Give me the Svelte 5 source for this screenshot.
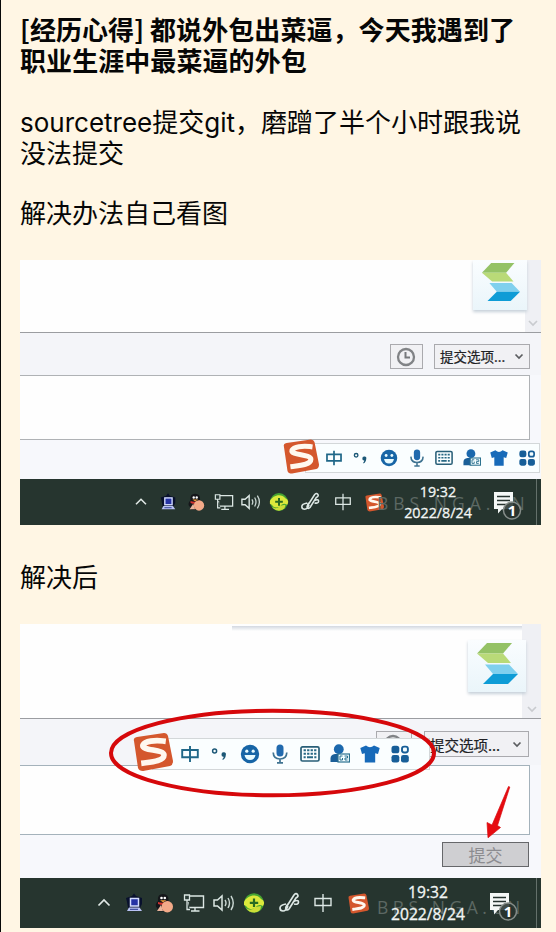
<script>
  const imeIcons = ['zhong', 'punct', 'smile', 'mic', 'keyboard', 'person', 'shirt', 'grid'];
  const trayIcons = ['up', 'pc', 'qq', 'monitor', 'speaker', 'shield', 'pen', 'lang', 'sogou'];
  const trayBefore = [27.6, 27.6, 27.6, 27.6, 27.6, 27.6, 35, 30, 33];
  const trayAfter = [30, 30, 30, 30, 30, 30, 40, 28, 42];
</script>

{#snippet sogou()}
  <svg viewBox="0 0 40 38" class="fill">
    <path d="M1 8Q0 5 4 4L31 0Q34 0 35 3L40 28Q40 32 37 33L10 38Q6 38 5 35Z" fill="#d4572d" />
    <path d="M30 8C22 7 12 8 10 12C8 18 31 16 31 22C31 28 19 29 11 30" fill="none" stroke="#fff8ef" stroke-width="5.6" stroke-linecap="square" stroke-linejoin="round" />
  </svg>
{/snippet}

{#snippet imeIcon(name)}
  <svg viewBox="0 0 20 20" class="ime-icon">
    {#if name === 'zhong'}
      <path d="M2.2 6H17.8V13.2H2.2ZM10 2V18" fill="none" stroke="#1f6788" stroke-width="1.9" />
    {:else if name === 'punct'}
      <circle cx="4.6" cy="7" r="2" fill="none" stroke="#1c5877" stroke-width="1.5" />
      <path d="M11.500 10.500a2.200 2.200 0 1 1 4.300.6c0 2.100-1.100 4-2.900 4.900l-.6-.9c1-.8 1.300-1.500 1.300-2.400a2 2 0 0 1-2.100-2.200Z" fill="#1c5877" />
    {:else if name === 'smile'}
      <circle cx="10" cy="10" r="9.200" fill="#1765a6" />
      <circle cx="6.800" cy="7.200" r="1.600" fill="#e8fbff" /><circle cx="13.200" cy="7.200" r="1.600" fill="#e8fbff" />
      <path d="M4.500 11H15.500Q14.600 16 10 16T4.500 11Z" fill="#e8fbff" />
    {:else if name === 'mic'}
      <rect x="6.500" y=".5" width="7" height="12" rx="3.500" fill="#216aae" />
      <path d="M3.200 8.500Q3.500 15 10 15T16.800 8.500M10 14.500V18.500M7 18.800H13" fill="none" stroke="#3f7391" stroke-width="1.700" />
    {:else if name === 'keyboard'}
      <rect x="1" y="2.800" width="18" height="14.200" rx="1.500" fill="none" stroke="#285f78" stroke-width="1.700" />
      <path d="M3.600 6.300H16.400M3.600 9.700H16.400" stroke="#286985" stroke-width="1.900" stroke-dasharray="2.300 1.200" />
      <path d="M3.600 13.200H5.700M7 13.200H13M14.300 13.200H16.400" stroke="#286985" stroke-width="1.900" />
    {:else if name === 'person'}
      <circle cx="8.800" cy="5.200" r="4.900" fill="#1b68ad" />
      <path d="M.5 18V14.500Q.5 10.500 5 10H10V18Z" fill="#1b5f98" />
      <rect x="8" y="10" width="11.500" height="8" fill="#f3fdff" stroke="#2b718f" stroke-width="1.200" />
      <path d="M12.500 12H10V16H12.500V14M14.500 12H17.500V14H15V16H17.500" fill="none" stroke="#2b718f" />
    {:else if name === 'shirt'}
      <path d="M6 1.500L.3 4L2 10L4.800 9.300V18.500H15.200V9.300L18 10L19.700 4L14 1.500Q10 5 6 1.500Z" fill="#176ab9" />
    {:else}
      <g fill="#175e98">
        <rect x="1.500" y="1.800" width="7.800" height="7.500" rx="2.600" />
        <rect x="1.500" y="11" width="7.800" height="7.500" rx="2.300" />
        <rect x="11" y="11" width="7.800" height="7.500" rx="2.300" />
      </g>
      <rect x="12" y="2.600" width="5.900" height="5.900" rx="2.200" fill="#f3fdff" stroke="#175e98" stroke-width="1.900" />
    {/if}
  </svg>
{/snippet}

{#snippet trayIcon(name)}
  {#if name === 'sogou'}
    <div class="tray-sogou">{@render sogou()}</div>
  {:else}
    <svg viewBox="0 0 22 22" class="tray-icon">
      {#if name === 'up'}
        <path d="M5.500 13.500L11 8L16.500 13.500" fill="none" stroke="#e2e9e7" stroke-width="1.700" />
      {:else if name === 'pc'}
        <path d="M3 6L9 4L11 1.500L13 4L19 6V12L17 16H5L4 10Z" fill="#08102d" />
        <rect x="7.500" y="6.500" width="8" height="7.500" fill="#2532a4" stroke="#d4dcff" stroke-width="1.500" />
        <path d="M6 15.500H16.500L19 19H4Z" fill="#b9c2f4" />
        <path d="M7 17.300H15" stroke="#28358e" />
      {:else if name === 'qq'}
        <path d="M4 16Q1 13 5 9Q4 2 10 2T15.500 9L17 15L14 19.500H6Z" fill="#15161a" />
        <circle cx="8.500" cy="6" r="1.300" fill="white" /><circle cx="11.800" cy="6" r="1.300" fill="white" />
        <path d="M5 10Q10 12 15.500 9V12Q10 14 5 12Z" fill="#d0322f" />
        <path d="M7 8.300H13.500L10 10.200Z" fill="#f2a13a" />
        <path d="M4 19L8 13L10 19Z" fill="#e9b49c" />
        <circle cx="14.300" cy="14.800" r="5.700" fill="#f2a988" />
      {:else if name === 'monitor'}
        <path d="M5 4H20.500V15.500H5V10M12 15.500V18.500M8 19H16.500" fill="none" stroke="#dce7e4" stroke-width="1.400" />
        <path d="M1.500 3H6.500V8H1.500ZM4 8V17.500H7" fill="#2b3c38" stroke="#dce7e4" stroke-width="1.300" />
      {:else if name === 'speaker'}
        <path d="M1 8H4.500L9 4V18L4.500 14H1Z" fill="none" stroke="#dce7e4" stroke-width="1.500" />
        <path d="M12 8Q14 11 12 14M15 6Q18 11 15 16M18 4Q22.500 11 18 18" fill="none" stroke="#cbd8d4" stroke-width="1.400" />
      {:else if name === 'shield'}
        <circle cx="11" cy="11" r="9.800" fill="#46a432" />
        <path d="M1 10C4 3 14 1 18 7Q23 9 20 14Q15 11 12 16Q6 19 3 14L1 13Z" fill="#dce93c" />
        <path d="M3 16Q8 20 12 15L18 14Q18 20 11 20.500Q6 20.500 3 16Z" fill="#cddd38" />
        <path d="M11 6.500V15M6.800 10.800H15.200" stroke="#286a22" stroke-width="2.200" />
      {:else if name === 'pen'}
        <path d="M9 14L16 3Q18 .5 19.500 2.500T18 6L11 17Q9 19 8 17T10 12M8 12Q2 13 2 16T5 19Q8 19 10 14M15 10Q20.500 7 20.500 10T16 12" fill="none" stroke="#dce7e4" stroke-width="1.700" />
      {:else if name === 'lang'}
        <path d="M3 6.500H19V13.500H3ZM11 2V20" fill="none" stroke="#dce7e4" stroke-width="1.400" />
      {/if}
    </svg>
  {/if}
{/snippet}

{#snippet clock()}
  <svg viewBox="0 0 20 20" class="clock-icon">
    <circle cx="10" cy="10" r="8" fill="none" stroke="#818386" stroke-width="2.300" />
    <path d="M9.500 5V10.500H14" fill="none" stroke="#77797c" stroke-width="2" />
  </svg>
{/snippet}

{#snippet appLogo()}
  <svg viewBox="0 0 44 42" class="app-logo">
    <path d="M12 0H37L28 10.500H2Z" fill="#94c266" />
    <path d="M2 10.500H28L36 20H13Z" fill="#b9da78" />
    <path d="M10 21.500H34L43 31H18Z" fill="#80d0ee" />
    <path d="M18 31H43L33 41H8Z" fill="#0e9cd6" />
  </svg>
{/snippet}

{#snippet ime(cls)}
  <div class="ime {cls}">
    <div class="ime-logo">{@render sogou()}</div>
    <div class="ime-bar">
      {#each imeIcons as name}<div class="ime-cell">{@render imeIcon(name)}</div>{/each}
    </div>
  </div>
{/snippet}

{#snippet taskbar(cls, widths)}
  <div class="taskbar {cls}">
    <div class="watermark">BBS.NGA.CN</div>
    <div class="tray">
      {#each trayIcons as name, i}
        <div class="tray-cell" style="width:{widths[i]}px">{@render trayIcon(name)}</div>
      {/each}
    </div>
    <div class="time"><span>19:32</span><span>2022/8/24</span></div>
    <svg class="notice" viewBox="0 0 30 32">
      <path d="M1 0H20V17H9L5 21.500V17H1Z" fill="#f5f8f7" />
      <path d="M4 4.500H17M4 8.500H17M4 12.500H13" stroke="#26332f" stroke-width="1.500" />
      <circle cx="19" cy="18.500" r="8.500" fill="#28332f" fill-opacity=".88" stroke="#858d89" stroke-width="1.500" />
      <text x="19" y="24" text-anchor="middle" fill="white" font-family="Open Sans, sans-serif" font-size="15" font-weight="700">1</text>
    </svg>
    <div class="peek"></div>
  </div>
{/snippet}

{#snippet desktop(cls, widths, solved)}
  <section class="shot {cls}">
    <div class="pane">
      <div class="card">{@render appLogo()}</div>
      <div class="scroll">
        <svg viewBox="0 0 10 7"><path d="M1 1L5 5L9 1" fill="none" stroke="#c9cbcf" stroke-width="1.700" /></svg>
      </div>
    </div>
    <div class="tools">
      <div class="history">{@render clock()}</div>
      <div class="options">
        <span>提交选项...</span>
        <svg viewBox="0 0 10 7"><path d="M1.500 1.500L5 5L8.500 1.500" fill="none" stroke="#5b5d60" stroke-width="1.700" /></svg>
      </div>
    </div>
    <div class="message"></div>
    <div class="footer">
      {#if solved}<div class="submit">提交</div>{/if}
    </div>
    {@render taskbar(cls, widths)}
    {@render ime(cls)}
    {#if solved}
      <svg class="marks" viewBox="0 0 521 304">
        <ellipse cx="252.500" cy="129" rx="161.500" ry="42.300" fill="none" stroke="#d6080b" stroke-width="4" />
        <path d="M488.500 162.500L489.800 163L477.500 201.500L480.500 203.500L468 213.800L467 198.500L472 201Z" fill="#e60b10" stroke="#d90a0e" stroke-width=".7" />
      </svg>
    {/if}
  </section>
{/snippet}

<main>
  <h1>[经历心得] 都说外包出菜逼，今天我遇到了<br />职业生涯中最菜逼的外包</h1>
  <p class="story"><span>sourcetree</span>提交<span>git</span>，磨蹭了半个小时跟我说<br />没法提交</p>
  <p class="answer">解决办法自己看图</p>
  {@render desktop('before', trayBefore, false)}
  <p class="after-title">解决后</p>
  {@render desktop('after', trayAfter, true)}
</main>

<style>
  :global(body) { margin: 0; background: #fff6e4; }
  main {
    box-sizing: border-box;
    width: 556px;
    height: 932px;
    overflow: hidden;
    border-left: 1px solid #080808;
    padding: 14px 0 0 19px;
    background: #fff6e4;
    color: #060606;
    font-family: "Noto Sans CJK SC", sans-serif;
  }
  h1, p { margin: 0; font-size: 26px; line-height: 31px; white-space: nowrap; }
  h1 { height: 61px; line-height: 30.500px; font-weight: 700; letter-spacing: .07px; }
  .story { height: 60px; margin-top: 31px; line-height: 30.500px; }
  .story span { font-family: Inter, sans-serif; line-height: 1; letter-spacing: 0; }
  .answer { margin-top: 30px; }
  .after-title { margin-top: 35px; }
  .shot { position: relative; width: 521px; background: #f7f8fc; overflow: hidden; }
  .shot.before { margin-top: 33px; height: 265px; }
  .shot.after { margin-top: 33px; height: 304px; }
  .pane {
    box-sizing: border-box;
    display: flex;
    justify-content: flex-end;
    background: #fefefe;
    border-bottom: 1px solid #9b9da1;
    height: 73px;
  }
  .after .pane { height: 95px; background: linear-gradient(#d3d8e0, #fefefe 5px) 212px 2px / 300px 8px no-repeat, #fefefe; }
  .card {
    display: flex;
    align-items: center;
    justify-content: center;
    width: 54px;
    height: 50px;
    margin-right: -2px;
    background: linear-gradient(#fafdff, #eaf5fa);
    box-shadow: 0 2px 3px #c6d0d9;
    z-index: 1;
  }
  .after .card { width: 58px; height: 52px; margin: 16px -4px 0 0; }
  .app-logo { width: 41px; height: 39px; margin-top: -6px; }
  .after .app-logo { width: 44px; height: 42px; margin-top: -5px; }
  .scroll { width: 16px; background: #eff0f4; display: flex; justify-content: center; align-items: flex-end; }
  .after .scroll { width: 19px; }
  .scroll svg { width: 10px; height: 7px; margin-bottom: 5px; }
  .tools {
    box-sizing: border-box;
    display: flex;
    justify-content: flex-end;
    height: 42px;
    padding: 11px 11px 0 0;
    background: #f4f5f9;
  }
  .after .tools { height: 46px; padding-top: 12px; padding-right: 12px; }
  .history, .options { box-sizing: border-box; border: 1px solid #aaaaae; height: 25px; background: #f1f1f4; display: flex; align-items: center; }
  .history { justify-content: center; width: 33px; margin-right: 11px; padding-right: 2px; }
  .options { width: 96px; padding: 0 5px; justify-content: space-between; font-size: 13.500px; line-height: 23px; color: #202124; }
  .options span { -webkit-text-stroke: .2px #202124; }
  .after .options { width: 105px; font-size: 14.500px; height: 26px; padding-right: 6px; }
  .after .history { width: 36px; margin-right: 12px; }
  .options svg { width: 10px; height: 7px; }
  .clock-icon { width: 20px; height: 20px; }
  .message { box-sizing: border-box; width: 510px; height: 65px; background: #fefefe; border: 1px solid #afb2b5; border-left: 0; }
  .after .message { height: 70px; border-color: #a4b2bb; }
  .footer { box-sizing: border-box; height: 39px; padding: 7px 12px 0 0; display: flex; justify-content: flex-end; }
  .after .footer { height: 43px; }
  .submit { box-sizing: border-box; width: 87px; height: 25px; border: 1.500px solid #66676a; background: #cfcfd2; color: #8c8c90; font-size: 17px; line-height: 23px; text-align: center; }
  .ime { position: absolute; display: flex; align-items: center; }
  .ime.before { left: 263px; top: 179px; }
  .ime.after { left: 113px; top: 109px; }
  .ime-logo { width: 36px; height: 35px; z-index: 1; flex: none; }
  .ime.after .ime-logo { width: 40px; height: 38px; }
  :global(.fill) { display: block; width: 100%; height: 100%; }
  .ime-bar { box-sizing: border-box; display: flex; align-items: center; height: 30px; margin: 2px 0 0 -14px; padding-left: 15px; background: #fafeff; border: 1px solid #d3d7d9; }
  .ime.after .ime-bar { width: 278px; height: 32px; margin-left: -21px; margin-top: 3px; padding-left: 22px; }
  .ime.before .ime-bar { width: 235px; padding-left: 14px; }
  .ime-cell { width: 27.600px; display: flex; justify-content: center; flex: none; }
  .ime.after .ime-cell { width: 30px; }
  .ime-icon { width: 18px; height: 18px; }
  .ime.after .ime-icon { width: 20px; height: 20px; }
  .taskbar { position: relative; height: 46px; background: #26352f; display: flex; box-sizing: border-box; padding-left: 107px; }
  .taskbar.after { height: 50px; padding-left: 69px; }
  .tray { display: flex; align-items: center; height: 46px; width: 267px; flex: none; }
  .after .tray { width: 291px; height: 50px; }
  .tray-cell { display: flex; justify-content: center; flex: none; }
  .tray-icon { width: 20px; height: 20px; }
  .after .tray-icon { width: 22px; height: 22px; }
  .tray-sogou { width: 19px; height: 19px; }
  .after .tray-sogou { width: 21px; height: 21px; }
  .time { position: relative; width: 88px; display: flex; flex-direction: column; align-items: center; padding-top: 3px; font: 14.300px/20.500px "Open Sans", sans-serif; color: #f2f5f4; -webkit-text-stroke: .3px #f2f5f4; }
  .after .time { width: 96px; font-size: 15.600px; line-height: 22px; flex: none; }
  .notice { position: relative; width: 30px; height: 32px; margin: 13px 0 0 11px; flex: none; }
  .after .notice { margin-left: 13px; margin-top: 15px; }
  .watermark { position: absolute; left: 357px; top: 14px; font: 17.500px/20px "Open Sans", sans-serif; letter-spacing: 5px; color: #5c6863; white-space: nowrap; }
  .after .watermark { top: 19px; letter-spacing: 4.500px; }
  .peek { position: absolute; right: 4px; top: 0; bottom: 0; width: 1px; background: #64706b; }
  .marks { position: absolute; left: 0; top: 0; width: 521px; height: 304px; }
</style>
